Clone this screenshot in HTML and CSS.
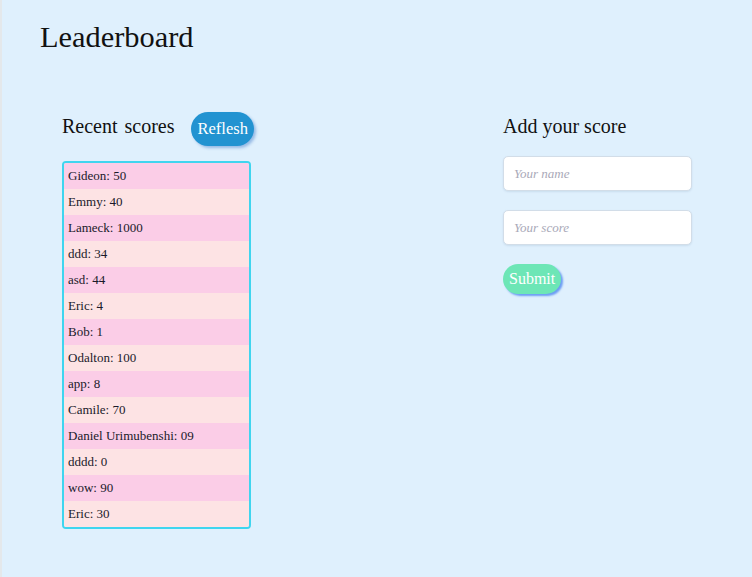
FILE: index.html
```html
<!DOCTYPE html>
<html lang="en">
<head>
<meta charset="utf-8">
<title>Leaderboard</title>
<link rel="stylesheet" href="styles.css">
</head>
<body>
<div class="page">
  <h1 class="title">Leaderboard</h1>
  <main class="board">
    <section class="recent">
      <div class="recent-head">
        <h2 class="section-title">Recent scores</h2>
        <button class="btn btn-refresh" type="button">Reflesh</button>
      </div>
      <ul class="scores">
        <li class="score">Gideon: 50</li>
        <li class="score">Emmy: 40</li>
        <li class="score">Lameck: 1000</li>
        <li class="score">ddd: 34</li>
        <li class="score">asd: 44</li>
        <li class="score">Eric: 4</li>
        <li class="score">Bob: 1</li>
        <li class="score">Odalton: 100</li>
        <li class="score">app: 8</li>
        <li class="score">Camile: 70</li>
        <li class="score">Daniel Urimubenshi: 09</li>
        <li class="score">dddd: 0</li>
        <li class="score">wow: 90</li>
        <li class="score">Eric: 30</li>
      </ul>
    </section>
    <section class="add">
      <h2 class="section-title add-title">Add your score</h2>
      <form class="add-form">
        <input class="field" type="text" placeholder="Your name">
        <input class="field" type="text" placeholder="Your score">
        <button class="btn btn-submit" type="button">Submit</button>
      </form>
    </section>
  </main>
</div>
</body>
</html>
```
FILE: styles.css
```css
* { box-sizing: border-box; }

html, body {
  margin: 0;
  padding: 0;
  height: 100%;
}

body {
  background: #dff0fd;
  font-family: "Liberation Serif", "Times New Roman", serif;
  color: #111;
}

.page {
  min-height: 100%;
  border-left: 2px solid #e4e8eb;
  padding: 0 0 0 38px;
}

.title {
  margin: 0;
  padding-top: 21px;
  font-size: 30.4px;
  font-weight: normal;
  line-height: 33px;
}

.board {
  display: grid;
  grid-template-columns: 441px 1fr;
  padding-left: 22px;
  margin-top: 58px;
}

.recent-head {
  display: flex;
  align-items: center;
  gap: 16px;
  height: 34px;
}

.section-title {
  margin: 0;
  font-size: 20px;
  font-weight: normal;
  line-height: 23px;
}

.recent-head .section-title {
  margin-bottom: 5px;
  word-spacing: 2px;
}

.btn {
  border: none;
  border-radius: 999px;
  color: #fff;
  font-family: "Liberation Serif", "Times New Roman", serif;
  cursor: pointer;
}

.btn-refresh {
  background: #2293d1;
  height: 34px;
  padding: 0 6px 0 7px;
  font-size: 16.5px;
  box-shadow: 2px 2px 3px rgba(60, 120, 200, 0.45);
}

.scores {
  list-style: none;
  margin: 15px 0 0;
  padding: 0;
  width: 189px;
  border: 2px solid #3fd5ef;
  border-radius: 4px;
  overflow: hidden;
}

.score {
  height: 26px;
  line-height: 26px;
  padding: 0 4px;
  font-size: 13px;
  color: #1a1a2a;
  background: #fde3e4;
}

.score:nth-child(odd) {
  background: #fbcde7;
}

.add-title {
  line-height: 28px;
}

.add-form {
  display: flex;
  flex-direction: column;
  align-items: flex-start;
  gap: 19px;
  margin-top: 16px;
}

.field {
  width: 189px;
  height: 35px;
  border: 1px solid #d2dde8;
  border-radius: 5px;
  background: #fff;
  padding: 0 10px;
  font-family: "Liberation Serif", "Times New Roman", serif;
  font-size: 13px;
  box-shadow: 0 1px 2px rgba(120, 150, 180, 0.2);
}

.field::placeholder {
  color: #a9a9b8;
  font-style: italic;
}

.btn-submit {
  background: #6de6b6;
  height: 30px;
  padding: 0 6px;
  font-size: 16px;
  box-shadow: 2px 2px 2px rgba(70, 130, 240, 0.75);
}
```
